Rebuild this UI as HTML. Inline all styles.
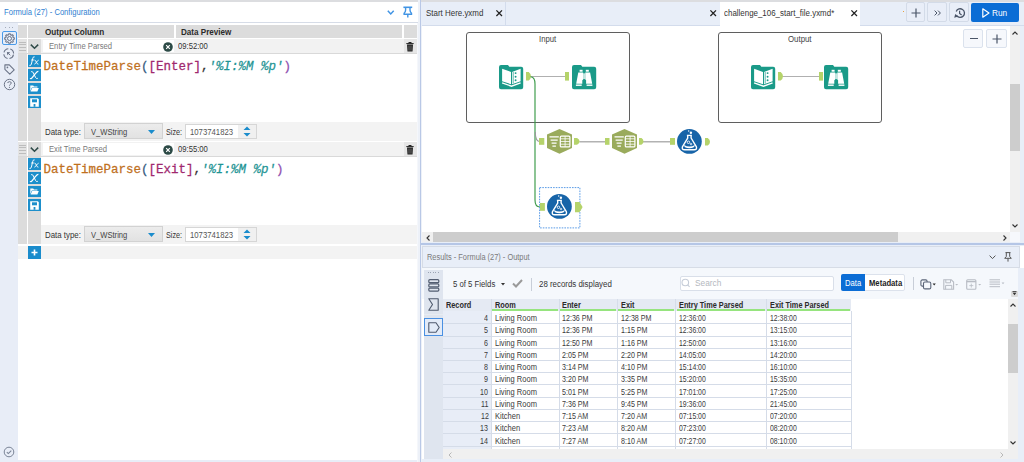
<!DOCTYPE html>
<html><head><meta charset="utf-8">
<style>
*{box-sizing:border-box;margin:0;padding:0}
html,body{width:1024px;height:462px;overflow:hidden;background:#fff;font-family:"Liberation Sans",sans-serif;color:#333}
.a{position:absolute}
.t{position:absolute;white-space:pre;line-height:1}
.m{font-family:"Liberation Mono",monospace}
svg{position:absolute;overflow:visible}
</style></head><body>
<div class="a" style="left:0;top:0;width:1024px;height:462px;overflow:hidden">

<div class="a" style="left:0px;top:0px;width:419px;height:2px;background:#dcdde0;"></div>
<div class="a" style="left:0px;top:2px;width:419px;height:20px;background:#ffffff;"></div>
<div class="t" style="left:4.10px;top:8.00px;font-size:8.5px;color:#2f80d1;font-weight:normal;transform:scaleX(0.8963);transform-origin:0 0;">Formula (27) - Configuration</div>
<svg style="left:387.3px;top:10px" width="7.5" height="5" viewBox="0 0 7.5 5"><path d="M0.8 0.8 L3.75 3.9 L6.7 0.8" fill="none" stroke="#4194e4" stroke-width="1.5"/></svg>
<svg style="left:402.5px;top:6px" width="10" height="12" viewBox="0 0 10 12"><path d="M0.4 1.3 H9.2" stroke="#4194e4" stroke-width="1.6"/><path d="M2.6 1.3 V4 Q2.6 6 1.1 7.3 V8.3 H8.5 V7.3 Q7 6 7 4 V1.3" fill="none" stroke="#4194e4" stroke-width="1.4"/><path d="M4.8 8.3 V11.4" stroke="#4194e4" stroke-width="1.4"/></svg>
<div class="a" style="left:0px;top:22px;width:419px;height:1px;background:#d6dce7;"></div>
<div class="a" style="left:0px;top:23px;width:18px;height:439px;background:#e8edf7;"></div>
<div class="a" style="left:18px;top:23px;width:400px;height:439px;background:#ffffff;"></div>
<div class="a" style="left:5px;top:27px;width:1.3px;height:1.3px;background:#a3abb9;"></div>
<div class="a" style="left:8.6px;top:27px;width:1.3px;height:1.3px;background:#a3abb9;"></div>
<div class="a" style="left:12.2px;top:27px;width:1.3px;height:1.3px;background:#a3abb9;"></div>
<div class="a" style="left:2px;top:31px;width:15px;height:14px;background:#e6eefa;border:1.3px solid #4a9ae8;border-radius:2px"></div>
<svg style="left:3.7px;top:32.7px" width="11" height="11" viewBox="0 0 11 11"><path d="M10.30 5.50 L10.29 5.81 L10.26 6.13 L9.72 6.34 L9.17 6.48 L9.10 6.72 L9.01 6.95 L8.91 7.18 L8.79 7.40 L9.08 7.89 L9.31 8.42 L9.11 8.66 L8.89 8.89 L8.66 9.11 L8.42 9.31 L7.89 9.08 L7.40 8.79 L7.18 8.91 L6.95 9.01 L6.72 9.10 L6.48 9.17 L6.34 9.72 L6.13 10.26 L5.81 10.29 L5.50 10.30 L5.19 10.29 L4.87 10.26 L4.66 9.72 L4.52 9.17 L4.28 9.10 L4.05 9.01 L3.82 8.91 L3.60 8.79 L3.11 9.08 L2.58 9.31 L2.34 9.11 L2.11 8.89 L1.89 8.66 L1.69 8.42 L1.92 7.89 L2.21 7.40 L2.09 7.18 L1.99 6.95 L1.90 6.72 L1.83 6.48 L1.28 6.34 L0.74 6.13 L0.71 5.81 L0.70 5.50 L0.71 5.19 L0.74 4.87 L1.28 4.66 L1.83 4.52 L1.90 4.28 L1.99 4.05 L2.09 3.82 L2.21 3.60 L1.92 3.11 L1.69 2.58 L1.89 2.34 L2.11 2.11 L2.34 1.89 L2.58 1.69 L3.11 1.92 L3.60 2.21 L3.82 2.09 L4.05 1.99 L4.28 1.90 L4.52 1.83 L4.66 1.28 L4.87 0.74 L5.19 0.71 L5.50 0.70 L5.81 0.71 L6.13 0.74 L6.34 1.28 L6.48 1.83 L6.72 1.90 L6.95 1.99 L7.18 2.09 L7.40 2.21 L7.89 1.92 L8.42 1.69 L8.66 1.89 L8.89 2.11 L9.11 2.34 L9.31 2.58 L9.08 3.11 L8.79 3.60 L8.91 3.82 L9.01 4.05 L9.10 4.28 L9.17 4.52 L9.72 4.66 L10.26 4.87 L10.29 5.19 Z" fill="none" stroke="#6c7588" stroke-width="1.1" stroke-linejoin="round"/><circle cx="5.5" cy="5.5" r="2" fill="none" stroke="#6c7588" stroke-width="1"/></svg>
<svg style="left:3px;top:48px" width="12" height="12" viewBox="0 0 12 12"><circle cx="5.7" cy="5.7" r="4.9" fill="none" stroke="#6c7588" stroke-width="1.1" stroke-dasharray="5.7 2" stroke-dashoffset="-1"/><path d="M3.9 3.9 L7.2 4.3 L4.3 7.2 Z" fill="#6c7588"/><path d="M5.2 5.2 L7.3 7.3" stroke="#6c7588" stroke-width="1"/></svg>
<svg style="left:3.6px;top:63.8px" width="11" height="11" viewBox="0 0 11 11"><path d="M0.9 0.9 H5.3 L10.2 5.8 L5.8 10.2 L0.9 5.3 Z" fill="none" stroke="#6c7588" stroke-width="1.1" stroke-linejoin="round"/><circle cx="3.4" cy="3.4" r="0.85" fill="#6c7588"/></svg>
<svg style="left:3px;top:78px" width="13" height="13" viewBox="0 0 13 13"><circle cx="6.5" cy="6.5" r="5.2" fill="none" stroke="#6c7588" stroke-width="1"/><path d="M4.7 5 C4.7 3.2 8.3 3.2 8.3 5 C8.3 6.3 6.5 6.2 6.5 7.6" fill="none" stroke="#6c7588" stroke-width="1"/><circle cx="6.5" cy="9.3" r="0.65" fill="#6c7588"/></svg>
<svg style="left:3px;top:446px" width="13" height="13" viewBox="0 0 13 13"><circle cx="6" cy="6" r="4.8" fill="none" stroke="#7a8496" stroke-width="1"/><path d="M3.8 6.2 L5.3 7.6 L8.3 4.6" fill="none" stroke="#7a8496" stroke-width="1.1"/></svg>
<div class="a" style="left:0px;top:460px;width:419px;height:2px;background:#e8edf7;"></div>
<div class="a" style="left:18px;top:24.5px;width:9px;height:13px;background:#dcdcdc;"></div>
<div class="a" style="left:28px;top:24.5px;width:13px;height:13px;background:#dcdcdc;"></div>
<div class="a" style="left:41px;top:24.5px;width:133px;height:13px;background:#dcdcdc;"></div>
<div class="a" style="left:176px;top:24.5px;width:226px;height:13px;background:#dcdcdc;"></div>
<div class="a" style="left:403.5px;top:24.5px;width:13px;height:13px;background:#dcdcdc;"></div>
<div class="t" style="left:45.10px;top:28.00px;font-size:8.5px;color:#2b2b2b;font-weight:bold;transform:scaleX(0.9581);transform-origin:0 0;">Output Column</div>
<div class="t" style="left:181.00px;top:28.00px;font-size:8.5px;color:#2b2b2b;font-weight:bold;transform:scaleX(0.9528);transform-origin:0 0;">Data Preview</div>
<div class="a" style="left:18px;top:39px;width:9px;height:14px;background:#e4e4e4;"></div>
<div class="a" style="left:19px;top:41.5px;width:7px;height:0.9px;background:#bdbdbd;"></div>
<div class="a" style="left:19px;top:44.3px;width:7px;height:0.9px;background:#bdbdbd;"></div>
<div class="a" style="left:19px;top:47.1px;width:7px;height:0.9px;background:#bdbdbd;"></div>
<div class="a" style="left:19px;top:49.9px;width:7px;height:0.9px;background:#bdbdbd;"></div>
<div class="a" style="left:28px;top:39px;width:13px;height:14px;background:#dcdcdc;"></div>
<svg style="left:30px;top:43.5px" width="9" height="5" viewBox="0 0 9 5"><path d="M0.8 0.6 L4.5 4.2 L8.2 0.6" fill="none" stroke="#2e4a48" stroke-width="1.5"/></svg>
<div class="a" style="left:41px;top:39px;width:362.5px;height:14px;background:#f2f2f2;"></div>
<div class="a" style="left:42.7px;top:40px;width:131px;height:12px;background:#ffffff;"></div>
<div class="t" style="left:48.75px;top:42.00px;font-size:8.5px;color:#7a7a7a;font-weight:normal;transform:scaleX(0.9021);transform-origin:0 0;">Entry Time Parsed</div>
<svg style="left:163px;top:42px" width="10" height="10" viewBox="0 0 10 10"><circle cx="5" cy="5" r="4.8" fill="#2c4a46"/><path d="M3.2 3.2 L6.8 6.8 M6.8 3.2 L3.2 6.8" stroke="#fff" stroke-width="1.2"/></svg>
<div class="t" style="left:178.00px;top:42.00px;font-size:8.5px;color:#333;font-weight:normal;transform:scaleX(0.9030);transform-origin:0 0;">09:52:00</div>
<div class="a" style="left:403.5px;top:39px;width:13px;height:14px;background:#e6e6e6;"></div>
<svg style="left:405.5px;top:41.5px" width="8" height="10" viewBox="0 0 8 10"><path d="M0.3 1.6 H7.7 M2.8 1.6 V0.5 H5.2 V1.6" fill="none" stroke="#222" stroke-width="1"/><path d="M1 2.6 H7 L6.5 9.6 H1.5 Z" fill="#222"/><path d="M2.8 3.6 V8.6 M4 3.6 V8.6 M5.2 3.6 V8.6" stroke="#888" stroke-width="0.5"/></svg>
<div class="a" style="left:18px;top:53px;width:398.5px;height:1px;background:#d9d9d9;"></div>
<div class="a" style="left:18px;top:54px;width:9px;height:68px;background:#dcdcdc;"></div>
<div class="a" style="left:28px;top:54px;width:13px;height:68px;background:#dcdcdc;"></div>
<div class="a" style="left:28.3px;top:55px;width:12.3px;height:12px;background:#1d8fcb"></div>
<svg style="left:28.3px;top:55px" width="12.3" height="12" viewBox="0 0 12.3 12"><path d="M6.6 1.9 Q5.4 1.2 4.8 3.2 L3.4 9 Q2.8 11 1.4 10.4" fill="none" stroke="#fff" stroke-width="0.95"/><path d="M3 5 H6.2" stroke="#fff" stroke-width="0.8"/><path d="M6.6 5.2 Q7.6 5 8.4 7.2 Q9.2 9.4 10.4 9.2 M10.6 5.2 Q9.6 5.4 8.4 7.2 Q7.2 9.2 6.4 9.2" fill="none" stroke="#fff" stroke-width="0.9"/></svg>
<div class="a" style="left:28.3px;top:69px;width:12.3px;height:11.7px;background:#1d8fcb"></div>
<svg style="left:28.3px;top:69px" width="12.3" height="11.7" viewBox="0 0 12.3 11.7"><path d="M3.2 2.6 Q4.6 2.2 5.4 4 L7.6 8.6 Q8.4 10 9.8 9.4" fill="none" stroke="#fff" stroke-width="1"/><path d="M10.4 2.4 Q9.4 2.2 7.4 4.6 L4.2 8.6 Q3 10.2 2 9.4" fill="none" stroke="#fff" stroke-width="1.2"/></svg>
<div class="a" style="left:28.3px;top:82.5px;width:12.3px;height:11.7px;background:#1d8fcb"></div>
<svg style="left:30.3px;top:85.3px" width="9" height="7" viewBox="0 0 9 7"><path d="M0.3 0.6 H3.2 L4 1.4 H7.4 V2.6 H1.8 L0.3 6.2 Z" fill="#fff"/><path d="M2.2 3.1 H8.8 L7.4 6.6 H0.6 Z" fill="#fff"/></svg>
<div class="a" style="left:28.3px;top:96.2px;width:12.3px;height:11.6px;background:#1d8fcb"></div>
<svg style="left:30px;top:97.6px" width="9" height="9" viewBox="0 0 9 9"><path d="M0.2 0.2 H7.8 L8.8 1.2 V8.8 H0.2 Z" fill="#fff"/><rect x="2" y="1.3" width="5" height="3" fill="#1d8fcb"/><rect x="3.6" y="6" width="1.8" height="2.8" fill="#1d8fcb"/></svg>
<div class="t m" style="left:43.5px;top:60.4px;font-size:12.5px;color:#333;-webkit-text-stroke:0.25px currentColor;transform:scaleY(1.07);transform-origin:0 0"><span style="color:#c0701e">DateTimeParse</span><span style="color:#345a80">(</span><span style="color:#a0286e">[Enter]</span><span style="color:#333">,</span><span style="color:#1e9494;font-style:italic">'%I:%M %p'</span><span style="color:#9050b0">)</span></div>
<div class="a" style="left:18px;top:122px;width:9px;height:19px;background:#dcdcdc;"></div>
<div class="a" style="left:28px;top:122px;width:13px;height:19px;background:#dcdcdc;"></div>
<div class="a" style="left:41px;top:122px;width:375.5px;height:19px;background:#f3f3f3;"></div>
<div class="t" style="left:44.90px;top:128.00px;font-size:8.5px;color:#333;font-weight:normal;transform:scaleX(0.9256);transform-origin:0 0;">Data type:</div>
<div class="a" style="left:84px;top:123.4px;width:78.6px;height:16px;background:linear-gradient(#ececec,#e2e2e2);border:1px solid #d2d2d2"></div>
<div class="t" style="left:91.30px;top:128.00px;font-size:8.5px;color:#444;font-weight:normal;transform:scaleX(0.8927);transform-origin:0 0;">V_WString</div>
<svg style="left:148px;top:130px" width="7" height="4" viewBox="0 0 7 4"><path d="M0 0 H7 L3.5 4 Z" fill="#1a8ccc"/></svg>
<div class="t" style="left:165.80px;top:128.00px;font-size:8.5px;color:#333;font-weight:normal;transform:scaleX(0.8526);transform-origin:0 0;">Size:</div>
<div class="a" style="left:185px;top:123.5px;width:72px;height:15.5px;background:#ffffff;border:1px solid #d6d6d6"></div>
<div class="a" style="left:238px;top:124.5px;width:18px;height:13.5px;background:#f0f0f0;"></div>
<div class="t" style="left:190.40px;top:128.00px;font-size:8.5px;color:#555;font-weight:normal;transform:scaleX(0.9106);transform-origin:0 0;">1073741823</div>
<svg style="left:243px;top:126px" width="8" height="11" viewBox="0 0 8 11"><path d="M0.5 4 L4 0.5 L7.5 4 Z M0.5 7 L4 10.5 L7.5 7 Z" fill="#1a8ccc"/></svg>
<div class="a" style="left:18px;top:142px;width:9px;height:14px;background:#e4e4e4;"></div>
<div class="a" style="left:19px;top:144.5px;width:7px;height:0.9px;background:#bdbdbd;"></div>
<div class="a" style="left:19px;top:147.3px;width:7px;height:0.9px;background:#bdbdbd;"></div>
<div class="a" style="left:19px;top:150.1px;width:7px;height:0.9px;background:#bdbdbd;"></div>
<div class="a" style="left:19px;top:152.9px;width:7px;height:0.9px;background:#bdbdbd;"></div>
<div class="a" style="left:28px;top:142px;width:13px;height:14px;background:#dcdcdc;"></div>
<svg style="left:30px;top:146.5px" width="9" height="5" viewBox="0 0 9 5"><path d="M0.8 0.6 L4.5 4.2 L8.2 0.6" fill="none" stroke="#2e4a48" stroke-width="1.5"/></svg>
<div class="a" style="left:41px;top:142px;width:362.5px;height:14px;background:#f2f2f2;"></div>
<div class="a" style="left:42.7px;top:143px;width:131px;height:12px;background:#ffffff;"></div>
<div class="t" style="left:48.75px;top:145.00px;font-size:8.5px;color:#7a7a7a;font-weight:normal;transform:scaleX(0.9023);transform-origin:0 0;">Exit Time Parsed</div>
<svg style="left:163px;top:145px" width="10" height="10" viewBox="0 0 10 10"><circle cx="5" cy="5" r="4.8" fill="#2c4a46"/><path d="M3.2 3.2 L6.8 6.8 M6.8 3.2 L3.2 6.8" stroke="#fff" stroke-width="1.2"/></svg>
<div class="t" style="left:178.00px;top:145.00px;font-size:8.5px;color:#333;font-weight:normal;transform:scaleX(0.9030);transform-origin:0 0;">09:55:00</div>
<div class="a" style="left:403.5px;top:142px;width:13px;height:14px;background:#e6e6e6;"></div>
<svg style="left:405.5px;top:144.5px" width="8" height="10" viewBox="0 0 8 10"><path d="M0.3 1.6 H7.7 M2.8 1.6 V0.5 H5.2 V1.6" fill="none" stroke="#222" stroke-width="1"/><path d="M1 2.6 H7 L6.5 9.6 H1.5 Z" fill="#222"/><path d="M2.8 3.6 V8.6 M4 3.6 V8.6 M5.2 3.6 V8.6" stroke="#888" stroke-width="0.5"/></svg>
<div class="a" style="left:18px;top:156px;width:398.5px;height:1px;background:#d9d9d9;"></div>
<div class="a" style="left:18px;top:157px;width:9px;height:68px;background:#dcdcdc;"></div>
<div class="a" style="left:28px;top:157px;width:13px;height:68px;background:#dcdcdc;"></div>
<div class="a" style="left:28.3px;top:158px;width:12.3px;height:12px;background:#1d8fcb"></div>
<svg style="left:28.3px;top:158px" width="12.3" height="12" viewBox="0 0 12.3 12"><path d="M6.6 1.9 Q5.4 1.2 4.8 3.2 L3.4 9 Q2.8 11 1.4 10.4" fill="none" stroke="#fff" stroke-width="0.95"/><path d="M3 5 H6.2" stroke="#fff" stroke-width="0.8"/><path d="M6.6 5.2 Q7.6 5 8.4 7.2 Q9.2 9.4 10.4 9.2 M10.6 5.2 Q9.6 5.4 8.4 7.2 Q7.2 9.2 6.4 9.2" fill="none" stroke="#fff" stroke-width="0.9"/></svg>
<div class="a" style="left:28.3px;top:172px;width:12.3px;height:11.7px;background:#1d8fcb"></div>
<svg style="left:28.3px;top:172px" width="12.3" height="11.7" viewBox="0 0 12.3 11.7"><path d="M3.2 2.6 Q4.6 2.2 5.4 4 L7.6 8.6 Q8.4 10 9.8 9.4" fill="none" stroke="#fff" stroke-width="1"/><path d="M10.4 2.4 Q9.4 2.2 7.4 4.6 L4.2 8.6 Q3 10.2 2 9.4" fill="none" stroke="#fff" stroke-width="1.2"/></svg>
<div class="a" style="left:28.3px;top:185.5px;width:12.3px;height:11.7px;background:#1d8fcb"></div>
<svg style="left:30.3px;top:188.3px" width="9" height="7" viewBox="0 0 9 7"><path d="M0.3 0.6 H3.2 L4 1.4 H7.4 V2.6 H1.8 L0.3 6.2 Z" fill="#fff"/><path d="M2.2 3.1 H8.8 L7.4 6.6 H0.6 Z" fill="#fff"/></svg>
<div class="a" style="left:28.3px;top:199.2px;width:12.3px;height:11.6px;background:#1d8fcb"></div>
<svg style="left:30px;top:200.6px" width="9" height="9" viewBox="0 0 9 9"><path d="M0.2 0.2 H7.8 L8.8 1.2 V8.8 H0.2 Z" fill="#fff"/><rect x="2" y="1.3" width="5" height="3" fill="#1d8fcb"/><rect x="3.6" y="6" width="1.8" height="2.8" fill="#1d8fcb"/></svg>
<div class="t m" style="left:43.5px;top:163.4px;font-size:12.5px;color:#333;-webkit-text-stroke:0.25px currentColor;transform:scaleY(1.07);transform-origin:0 0"><span style="color:#c0701e">DateTimeParse</span><span style="color:#345a80">(</span><span style="color:#a0286e">[Exit]</span><span style="color:#333">,</span><span style="color:#1e9494;font-style:italic">'%I:%M %p'</span><span style="color:#9050b0">)</span></div>
<div class="a" style="left:18px;top:225px;width:9px;height:19px;background:#dcdcdc;"></div>
<div class="a" style="left:28px;top:225px;width:13px;height:19px;background:#dcdcdc;"></div>
<div class="a" style="left:41px;top:225px;width:375.5px;height:19px;background:#f3f3f3;"></div>
<div class="t" style="left:44.90px;top:231.00px;font-size:8.5px;color:#333;font-weight:normal;transform:scaleX(0.9256);transform-origin:0 0;">Data type:</div>
<div class="a" style="left:84px;top:226.4px;width:78.6px;height:16px;background:linear-gradient(#ececec,#e2e2e2);border:1px solid #d2d2d2"></div>
<div class="t" style="left:91.30px;top:231.00px;font-size:8.5px;color:#444;font-weight:normal;transform:scaleX(0.8927);transform-origin:0 0;">V_WString</div>
<svg style="left:148px;top:233px" width="7" height="4" viewBox="0 0 7 4"><path d="M0 0 H7 L3.5 4 Z" fill="#1a8ccc"/></svg>
<div class="t" style="left:165.80px;top:231.00px;font-size:8.5px;color:#333;font-weight:normal;transform:scaleX(0.8526);transform-origin:0 0;">Size:</div>
<div class="a" style="left:185px;top:226.5px;width:72px;height:15.5px;background:#ffffff;border:1px solid #d6d6d6"></div>
<div class="a" style="left:238px;top:227.5px;width:18px;height:13.5px;background:#f0f0f0;"></div>
<div class="t" style="left:190.40px;top:231.00px;font-size:8.5px;color:#555;font-weight:normal;transform:scaleX(0.9106);transform-origin:0 0;">1073741823</div>
<svg style="left:243px;top:229px" width="8" height="11" viewBox="0 0 8 11"><path d="M0.5 4 L4 0.5 L7.5 4 Z M0.5 7 L4 10.5 L7.5 7 Z" fill="#1a8ccc"/></svg>
<div class="a" style="left:18px;top:246px;width:398.5px;height:13px;background:#f3f3f3;"></div>
<div class="a" style="left:27.5px;top:246px;width:13.5px;height:13px;background:#1a8ccc;"></div>
<svg style="left:30.5px;top:249px" width="7" height="7" viewBox="0 0 7 7"><path d="M3.5 0.5 V6.5 M0.5 3.5 H6.5" stroke="#fff" stroke-width="1.6"/></svg>
<div class="a" style="left:416.5px;top:23px;width:5px;height:439px;background:#f5f7fb;"></div>
<div class="a" style="left:418px;top:0px;width:3.5px;height:462px;background:#edf1f8;"></div>
<div class="a" style="left:419.7px;top:0px;width:1.5px;height:462px;background:#b9c8e6;"></div>
<div class="a" style="left:421px;top:0px;width:603px;height:1.5px;background:#dcdde0;"></div>
<div class="a" style="left:421px;top:1.5px;width:603px;height:24px;background:#e8eef8;"></div>
<div class="a" style="left:422px;top:25px;width:602px;height:1px;background:#d3dcec;"></div>
<div class="t" style="left:426.00px;top:9.00px;font-size:8.5px;color:#333;font-weight:normal;transform:scaleX(0.9344);transform-origin:0 0;">Start Here.yxmd</div>
<svg style="left:495.8px;top:10.100000000000001px" width="6.4" height="6.4" viewBox="0 0 6.4 6.4"><path d="M0.4 0.4 L6.0 6.0 M6.0 0.4 L0.4 6.0" stroke="#222" stroke-width="1.3"/></svg>
<div class="a" style="left:505px;top:1.5px;width:1px;height:24px;background:#d3dcec;"></div>
<svg style="left:710.0999999999999px;top:10.100000000000001px" width="6.4" height="6.4" viewBox="0 0 6.4 6.4"><path d="M0.4 0.4 L6.0 6.0 M6.0 0.4 L0.4 6.0" stroke="#222" stroke-width="1.3"/></svg>
<div class="a" style="left:719.5px;top:1.5px;width:140.5px;height:25px;background:#ffffff;"></div>
<div class="t" style="left:723.90px;top:9.00px;font-size:8.5px;color:#333;font-weight:normal;transform:scaleX(0.9331);transform-origin:0 0;">challenge_106_start_file.yxmd*</div>
<svg style="left:850.8px;top:10.100000000000001px" width="6.4" height="6.4" viewBox="0 0 6.4 6.4"><path d="M0.4 0.4 L6.0 6.0 M6.0 0.4 L0.4 6.0" stroke="#222" stroke-width="1.3"/></svg>
<div class="a" style="left:903px;top:11px;width:1px;height:1px;background:#e8a040;"></div>
<div class="a" style="left:905.7px;top:2.4px;width:19.8px;height:20px;background:#e9eef8;border:1px solid #d3dbe8;border-radius:2px"></div>
<div class="a" style="left:927.3px;top:2.4px;width:19.8px;height:20px;background:#e9eef8;border:1px solid #d3dbe8;border-radius:2px"></div>
<div class="a" style="left:949.3px;top:2.4px;width:19.8px;height:20px;background:#e9eef8;border:1px solid #d3dbe8;border-radius:2px"></div>
<svg style="left:911px;top:7.5px" width="10" height="10" viewBox="0 0 10 10"><path d="M5 0.5 V9.5 M0.5 5 H9.5" stroke="#4a5568" stroke-width="1.2"/></svg>
<svg style="left:933.5px;top:9.5px" width="8" height="6" viewBox="0 0 8 6"><path d="M0.6 0.6 L3 3 L0.6 5.4 M4 0.6 L6.4 3 L4 5.4" fill="none" stroke="#4a5568" stroke-width="1"/></svg>
<svg style="left:953px;top:6.7px" width="14" height="13" viewBox="0 0 14 13"><path d="M3.2 4.4 A4.3 4.3 0 1 1 3.7 8.6" fill="none" stroke="#4a5568" stroke-width="1.3"/><path d="M1.2 10.8 L2.3 6.9 L5.4 9.6 Z" fill="#4a5568"/><path d="M6.6 3.8 V6.4 L8.6 8" fill="none" stroke="#4a5568" stroke-width="1.2"/></svg>
<div class="a" style="left:971px;top:2.7px;width:48px;height:19.4px;background:#0b6dd5;border-radius:2px"></div>
<svg style="left:981.5px;top:7.5px" width="8" height="10" viewBox="0 0 8 10"><path d="M0.8 0.8 L7 5 L0.8 9.2 Z" fill="none" stroke="#fff" stroke-width="1.2" stroke-linejoin="round"/></svg>
<div class="t" style="left:992.20px;top:9.00px;font-size:8.5px;color:#fff;font-weight:normal;transform:scaleX(0.9733);transform-origin:0 0;">Run</div>
<div class="a" style="left:422px;top:26px;width:588px;height:206px;background:#ffffff;"></div>
<div class="a" style="left:963.4px;top:28.8px;width:20px;height:19.6px;background:#f6f8fc;border:1px solid #dbe2ed;border-radius:2px"></div>
<div class="a" style="left:986.3px;top:28.8px;width:20.3px;height:19.6px;background:#f6f8fc;border:1px solid #dbe2ed;border-radius:2px"></div>
<div class="a" style="left:969.5px;top:38px;width:8px;height:1.3px;background:#4a5568;"></div>
<svg style="left:991.5px;top:34px" width="10" height="10" viewBox="0 0 10 10"><path d="M5 0.5 V9.5 M0.5 5 H9.5" stroke="#4a5568" stroke-width="1.2"/></svg>
<div class="a" style="left:1010px;top:26px;width:10px;height:206px;background:#f0f0f0;"></div>
<div class="a" style="left:1010px;top:84.4px;width:10px;height:66.6px;background:#cdcdcd;"></div>
<svg style="left:1012px;top:30.5px" width="6" height="4" viewBox="0 0 6 4"><path d="M0.5 3.5 L3 1 L5.5 3.5" fill="none" stroke="#333" stroke-width="1.1"/></svg>
<svg style="left:1012px;top:223.5px" width="6" height="4" viewBox="0 0 6 4"><path d="M0.5 0.5 L3 3 L5.5 0.5" fill="none" stroke="#333" stroke-width="1.1"/></svg>
<div class="a" style="left:1020px;top:26px;width:4px;height:216px;background:#e8eef8;"></div>
<div class="a" style="left:422px;top:232px;width:588px;height:10px;background:#f0f0f0;"></div>
<div class="a" style="left:433px;top:232px;width:465px;height:10px;background:#cdcdcd;"></div>
<svg style="left:425.5px;top:234.5px" width="4" height="6" viewBox="0 0 4 6"><path d="M3.5 0.5 L1 3 L3.5 5.5" fill="none" stroke="#333" stroke-width="1.1"/></svg>
<svg style="left:1003px;top:234.5px" width="4" height="6" viewBox="0 0 4 6"><path d="M0.5 0.5 L3 3 L0.5 5.5" fill="none" stroke="#333" stroke-width="1.1"/></svg>
<div class="a" style="left:1010px;top:232px;width:10px;height:10px;background:#f6f8fc;"></div>
<div class="a" style="left:422px;top:242px;width:602px;height:4px;background:#e8eef8;"></div>
<div class="a" style="left:421px;top:243.4px;width:603px;height:1.8px;background:#b5c6e6;"></div>
<div class="a" style="left:466px;top:31.9px;width:164px;height:90.9px;background:transparent;border:1.3px solid #5f5f5f;border-radius:3px"></div>
<div class="t" style="left:538.70px;top:35.00px;font-size:8.5px;color:#444;font-weight:normal;transform:scaleX(0.9105);transform-origin:0 0;">Input</div>
<div class="a" style="left:718.2px;top:31.9px;width:163.79999999999995px;height:90.9px;background:transparent;border:1.3px solid #5f5f5f;border-radius:3px"></div>
<div class="t" style="left:787.90px;top:35.00px;font-size:8.5px;color:#444;font-weight:normal;transform:scaleX(0.9231);transform-origin:0 0;">Output</div>
<svg style="left:498.5px;top:64.5px" width="25" height="25" viewBox="0 0 25 25"><path d="M0 2 Q0 0 2 0 H9 L10.3 1.7 H22.2 Q24.2 1.7 24.2 3.7 V22.2 Q24.2 24.2 22.2 24.2 H2 Q0 24.2 0 22.2 Z" fill="#1a9a88"/><path d="M3.1 3.8 L12 6.9 V19.2 L3.1 16.3 Z" fill="#fff"/><path d="M13 6.9 L21.6 3.8 V16.3 L13 19.2 Z" fill="#fff"/><path d="M3.1 17.9 L12.5 21.2 L21.6 17.9" fill="none" stroke="#fff" stroke-width="1.3"/><path d="M14.2 7 V18.5" stroke="#1a9a88" stroke-width="0.7"/><circle cx="16.6" cy="8.1" r="0.95" fill="#1a9a88"/><circle cx="16.6" cy="11.7" r="0.95" fill="#1a9a88"/><circle cx="16.6" cy="15.2" r="0.95" fill="#1a9a88"/></svg>
<svg style="left:571.7px;top:64.5px" width="25" height="25" viewBox="0 0 25 25"><path d="M0 2 Q0 0 2 0 H9 L10.3 1.7 H22.2 Q24.2 1.7 24.2 3.7 V22.2 Q24.2 24.2 22.2 24.2 H2 Q0 24.2 0 22.2 Z" fill="#1a9a88"/><rect x="7.6" y="4.8" width="3" height="1.9" fill="#fff"/><rect x="13.8" y="4.8" width="3" height="1.9" fill="#fff"/><path d="M6.3 7.6 H11.1 V18.7 H4.2 Z" fill="#fff"/><path d="M18.1 7.6 H13.3 V18.7 H20.2 Z" fill="#fff"/><rect x="11.1" y="8.3" width="2.2" height="6" fill="#fff" opacity="0.75"/><path d="M10.3 18.9 V15.3 Q12.2 13 14.1 15.3 V18.9 Z" fill="#1a9a88"/><rect x="3.9" y="19.5" width="5.8" height="1.4" fill="#fff"/><rect x="14.6" y="19.5" width="5.8" height="1.4" fill="#fff"/></svg>
<svg style="left:750.7px;top:64.5px" width="25" height="25" viewBox="0 0 25 25"><path d="M0 2 Q0 0 2 0 H9 L10.3 1.7 H22.2 Q24.2 1.7 24.2 3.7 V22.2 Q24.2 24.2 22.2 24.2 H2 Q0 24.2 0 22.2 Z" fill="#1a9a88"/><path d="M3.1 3.8 L12 6.9 V19.2 L3.1 16.3 Z" fill="#fff"/><path d="M13 6.9 L21.6 3.8 V16.3 L13 19.2 Z" fill="#fff"/><path d="M3.1 17.9 L12.5 21.2 L21.6 17.9" fill="none" stroke="#fff" stroke-width="1.3"/><path d="M14.2 7 V18.5" stroke="#1a9a88" stroke-width="0.7"/><circle cx="16.6" cy="8.1" r="0.95" fill="#1a9a88"/><circle cx="16.6" cy="11.7" r="0.95" fill="#1a9a88"/><circle cx="16.6" cy="15.2" r="0.95" fill="#1a9a88"/></svg>
<svg style="left:823.6px;top:64.5px" width="25" height="25" viewBox="0 0 25 25"><path d="M0 2 Q0 0 2 0 H9 L10.3 1.7 H22.2 Q24.2 1.7 24.2 3.7 V22.2 Q24.2 24.2 22.2 24.2 H2 Q0 24.2 0 22.2 Z" fill="#1a9a88"/><rect x="7.6" y="4.8" width="3" height="1.9" fill="#fff"/><rect x="13.8" y="4.8" width="3" height="1.9" fill="#fff"/><path d="M6.3 7.6 H11.1 V18.7 H4.2 Z" fill="#fff"/><path d="M18.1 7.6 H13.3 V18.7 H20.2 Z" fill="#fff"/><rect x="11.1" y="8.3" width="2.2" height="6" fill="#fff" opacity="0.75"/><path d="M10.3 18.9 V15.3 Q12.2 13 14.1 15.3 V18.9 Z" fill="#1a9a88"/><rect x="3.9" y="19.5" width="5.8" height="1.4" fill="#fff"/><rect x="14.6" y="19.5" width="5.8" height="1.4" fill="#fff"/></svg>
<svg style="left:525.6px;top:72.4px" width="5" height="8.6" viewBox="0 0 5 8.6"><path d="M0 0 H2.75 Q5 1.72 5 4.3 Q5 6.88 2.75 8.6 H0 Z" fill="#b5d36a"/></svg>
<svg style="left:564.5px;top:72.4px" width="4" height="8.6" viewBox="0 0 4 8.6"><rect x="0" y="0" width="4" height="8.6" fill="#b5d36a"/></svg>
<svg style="left:777.6px;top:72.4px" width="5" height="8.6" viewBox="0 0 5 8.6"><path d="M0 0 H2.75 Q5 1.72 5 4.3 Q5 6.88 2.75 8.6 H0 Z" fill="#b5d36a"/></svg>
<svg style="left:818.5px;top:72.4px" width="4" height="8.6" viewBox="0 0 4 8.6"><rect x="0" y="0" width="4" height="8.6" fill="#b5d36a"/></svg>
<div class="a" style="left:530.6px;top:76.1px;width:34px;height:1.2px;background:#b0b0b0;"></div>
<div class="a" style="left:782.6px;top:76.1px;width:36px;height:1.2px;background:#b0b0b0;"></div>
<svg style="left:0;top:0" width="1024" height="462" viewBox="0 0 1024 462"><path d="M530.5 76.7 Q535 76.7 535 84 V200 Q535 207 540 207" fill="none" stroke="#3a9a48" stroke-width="1.15"/><path d="M535.3 132 Q535.3 141.5 540 141.5" fill="none" stroke="#9a9a9a" stroke-width="1.1"/><path d="M579.4 141.7 H605 M643 141.7 H670" fill="none" stroke="#b2b2b2" stroke-width="1.4"/></svg>
<svg style="left:546.7px;top:128.9px" width="25" height="24.7" viewBox="0 0 25 24.7"><path d="M12.5 0 L25 5.4 V19 L12.5 24.7 L0 19 V5.4 Z" fill="#9aab5c"/><path d="M2.5 7.9 H11.8 M3.6 11.1 H10.7 M4.6 14.1 H9.6 M5.4 17.1 H8.9" stroke="#fff" stroke-width="1.4"/><rect x="13.3" y="7.2" width="9.6" height="10.7" rx="1" fill="none" stroke="#fff" stroke-width="1.2"/><path d="M13.3 9.8 H22.9 M13.3 12.5 H22.9 M13.3 15.2 H22.9 M18.1 7.2 V17.9" stroke="#fff" stroke-width="0.8"/></svg>
<svg style="left:611.6px;top:128.9px" width="25" height="24.7" viewBox="0 0 25 24.7"><path d="M12.5 0 L25 5.4 V19 L12.5 24.7 L0 19 V5.4 Z" fill="#9aab5c"/><path d="M2.5 7.9 H11.8 M3.6 11.1 H10.7 M4.6 14.1 H9.6 M5.4 17.1 H8.9" stroke="#fff" stroke-width="1.4"/><rect x="13.3" y="7.2" width="9.6" height="10.7" rx="1" fill="none" stroke="#fff" stroke-width="1.2"/><path d="M13.3 9.8 H22.9 M13.3 12.5 H22.9 M13.3 15.2 H22.9 M18.1 7.2 V17.9" stroke="#fff" stroke-width="0.8"/></svg>
<svg style="left:539.4px;top:138.3px" width="5.3" height="6.8" viewBox="0 0 5.3 6.8"><rect x="0" y="0" width="5.3" height="6.8" fill="#b5d36a"/></svg>
<svg style="left:573.8px;top:138.3px" width="5.6" height="6.8" viewBox="0 0 5.6 6.8"><path d="M0 0 H3.08 Q5.6 1.36 5.6 3.4 Q5.6 5.44 3.08 6.8 H0 Z" fill="#b5d36a"/></svg>
<svg style="left:604.8px;top:138.3px" width="4.5" height="6.8" viewBox="0 0 4.5 6.8"><rect x="0" y="0" width="4.5" height="6.8" fill="#b5d36a"/></svg>
<svg style="left:638.8px;top:138.3px" width="4.5" height="6.8" viewBox="0 0 4.5 6.8"><path d="M0 0 H2.475 Q4.5 1.36 4.5 3.4 Q4.5 5.44 2.475 6.8 H0 Z" fill="#b5d36a"/></svg>
<svg style="left:677.0px;top:129.4px" width="24.8" height="24.8" viewBox="-12.4 -12.4 24.8 24.8"><circle cx="0" cy="0" r="12.4" fill="#1764a8"/><path d="M-2.5 -6 H2.5 M-1.7 -6 V-3.2 L-6.9 5.2 Q-8 8.4 -4.6 8.4 H4.6 Q8 8.4 6.9 5.2 L1.7 -3.4 V-6.6" fill="none" stroke="#fff" stroke-width="1.4" stroke-linejoin="round"/><path d="M-5.5 3.6 Q0 6.6 5.5 3.6 Q5 6.9 0 6.9 Q-5 6.9 -5.5 3.6 Z" fill="#fff"/><circle cx="-0.9" cy="0.9" r="1.25" fill="none" stroke="#fff" stroke-width="0.9"/><circle cx="1.7" cy="2.7" r="0.75" fill="none" stroke="#fff" stroke-width="0.8"/><circle cx="1.5" cy="-8.6" r="1.2" fill="#fff"/><circle cx="-0.7" cy="-10.4" r="0.7" fill="#fff"/></svg>
<svg style="left:669.8px;top:138.3px" width="5" height="6.8" viewBox="0 0 5 6.8"><rect x="0" y="0" width="5" height="6.8" fill="#b5d36a"/></svg>
<svg style="left:704.7px;top:137.8px" width="5" height="7.5" viewBox="0 0 5 7.5"><path d="M0 0 H2.75 Q5 1.5 5 3.75 Q5 6.0 2.75 7.5 H0 Z" fill="#b5d36a"/></svg>
<svg style="left:539px;top:186.6px" width="41.5" height="41.5" viewBox="0 0 41.5 41.5"><rect x="0.6" y="0.6" width="40.3" height="40.3" fill="none" stroke="#5a9be6" stroke-width="1" stroke-dasharray="1.6 1.1"/></svg>
<svg style="left:547.0px;top:194.1px" width="24.8" height="24.8" viewBox="-12.4 -12.4 24.8 24.8"><circle cx="0" cy="0" r="12.4" fill="#1764a8"/><path d="M-2.5 -6 H2.5 M-1.7 -6 V-3.2 L-6.9 5.2 Q-8 8.4 -4.6 8.4 H4.6 Q8 8.4 6.9 5.2 L1.7 -3.4 V-6.6" fill="none" stroke="#fff" stroke-width="1.4" stroke-linejoin="round"/><path d="M-5.5 3.6 Q0 6.6 5.5 3.6 Q5 6.9 0 6.9 Q-5 6.9 -5.5 3.6 Z" fill="#fff"/><circle cx="-0.9" cy="0.9" r="1.25" fill="none" stroke="#fff" stroke-width="0.9"/><circle cx="1.7" cy="2.7" r="0.75" fill="none" stroke="#fff" stroke-width="0.8"/><circle cx="1.5" cy="-8.6" r="1.2" fill="#fff"/><circle cx="-0.7" cy="-10.4" r="0.7" fill="#fff"/></svg>
<svg style="left:539.9px;top:203px" width="4.9" height="7.8" viewBox="0 0 4.9 7.8"><rect x="0" y="0" width="4.9" height="7.8" fill="#b5d36a"/></svg>
<svg style="left:574.5px;top:201.6px" width="7.5" height="10.2" viewBox="0 0 7.5 10.2"><path d="M0 0 H4.5 L7.3 4.4 Q7.6 5.1 7.3 5.8 L4.5 10.2 H0 Z" fill="#b5d36a"/></svg>
<div class="a" style="left:422px;top:246px;width:602px;height:216px;background:#ffffff;"></div>
<div class="a" style="left:422px;top:246px;width:598px;height:22px;background:#e8eef8;border:1px solid #d6dce6"></div>
<div class="t" style="left:426.90px;top:253.00px;font-size:8.5px;color:#7a7a7a;font-weight:normal;transform:scaleX(0.8729);transform-origin:0 0;">Results - Formula (27) - Output</div>
<svg style="left:988.5px;top:254.5px" width="7" height="4.5" viewBox="0 0 7 4.5"><path d="M0.6 0.6 L3.5 3.6 L6.4 0.6" fill="none" stroke="#555" stroke-width="1"/></svg>
<svg style="left:1004px;top:251.5px" width="8" height="10" viewBox="0 0 8 10"><path d="M1.5 0.6 H6.5 M2.3 0.6 V4.5 L0.7 6.3 H7.3 L5.7 4.5 V0.6 M4 6.3 V9.6" fill="none" stroke="#555" stroke-width="1"/></svg>
<div class="a" style="left:422px;top:268px;width:602px;height:31px;background:#f5f8fc;"></div>
<div class="a" style="left:1018px;top:268px;width:6px;height:194px;background:#e8eef8;"></div>
<div class="a" style="left:424px;top:270px;width:19px;height:189px;background:#dfe5ef;"></div>
<div class="a" style="left:427.5px;top:272px;width:1.1px;height:1.1px;background:#9aa3b3;"></div>
<div class="a" style="left:430.1px;top:272px;width:1.1px;height:1.1px;background:#9aa3b3;"></div>
<div class="a" style="left:432.7px;top:272px;width:1.1px;height:1.1px;background:#9aa3b3;"></div>
<div class="a" style="left:435.3px;top:272px;width:1.1px;height:1.1px;background:#9aa3b3;"></div>
<div class="a" style="left:437.9px;top:272px;width:1.1px;height:1.1px;background:#9aa3b3;"></div>
<svg style="left:427.8px;top:279px" width="12" height="13" viewBox="0 0 12 13"><rect x="0.8" y="0.7" width="10" height="3" rx="1" fill="none" stroke="#535e72" stroke-width="1.2"/><rect x="0.8" y="4.9" width="10" height="3" rx="1" fill="none" stroke="#535e72" stroke-width="1.2"/><rect x="0.8" y="9.1" width="10" height="3" rx="1" fill="none" stroke="#535e72" stroke-width="1.2"/></svg>
<div class="a" style="left:424px;top:314.2px;width:19px;height:0.8px;background:#e8ecf2;"></div>
<svg style="left:428px;top:298px" width="11" height="13" viewBox="0 0 11 13"><path d="M0.8 0.8 H10.2 V12.2 H0.8 L4.5 6.5 Z" fill="none" stroke="#4f5a6e" stroke-width="1.1" stroke-linejoin="round"/></svg>
<div class="a" style="left:424.3px;top:317.9px;width:18.3px;height:18.5px;background:#e3ebf8;border:1px solid #4a90e2"></div>
<svg style="left:427.5px;top:321.5px" width="12" height="11" viewBox="0 0 12 11"><path d="M0.8 0.8 H8 L11.2 5.5 L8 10.2 H0.8 Z" fill="none" stroke="#4f5a6e" stroke-width="1.1" stroke-linejoin="round"/></svg>
<div class="t" style="left:452.80px;top:280.00px;font-size:8.5px;color:#333;font-weight:normal;transform:scaleX(0.9130);transform-origin:0 0;">5 of 5 Fields</div>
<svg style="left:501px;top:283px" width="4" height="3" viewBox="0 0 4 3"><path d="M0 0 H4 L2 2.5 Z" fill="#333"/></svg>
<svg style="left:512px;top:278.5px" width="11" height="9" viewBox="0 0 11 9"><path d="M1 4.5 L4 7.5 L10 1" fill="none" stroke="#9a9a9a" stroke-width="2"/></svg>
<div class="a" style="left:531px;top:278px;width:1px;height:13px;background:#c8ced8;"></div>
<div class="t" style="left:538.60px;top:280.00px;font-size:8.5px;color:#333;font-weight:normal;transform:scaleX(0.9282);transform-origin:0 0;">28 records displayed</div>
<div class="a" style="left:679.5px;top:275.5px;width:154.3px;height:15px;background:#ffffff;border:1px solid #d9dfe9;border-radius:2px"></div>
<svg style="left:681px;top:278.3px" width="10" height="10" viewBox="0 0 10 10"><circle cx="4.3" cy="4.5" r="3.3" fill="none" stroke="#c6cdd8" stroke-width="1.1"/><path d="M6.7 6.9 L8.6 8.8" stroke="#c6cdd8" stroke-width="1.1"/></svg>
<div class="t" style="left:694.60px;top:279.00px;font-size:8.5px;color:#b4b8be;font-weight:normal;transform:scaleX(0.9778);transform-origin:0 0;">Search</div>
<div class="a" style="left:840.5px;top:273.9px;width:64.5px;height:17.5px;background:#ffffff;border:1px solid #dce2ec;border-radius:2px"></div>
<div class="a" style="left:840.5px;top:273.9px;width:24px;height:17.5px;background:#0b6dd5;border-radius:2px 0 0 2px"></div>
<div class="t" style="left:844.60px;top:279.00px;font-size:8.5px;color:#fff;font-weight:normal;transform:scaleX(0.9000);transform-origin:0 0;">Data</div>
<div class="t" style="left:868.70px;top:279.00px;font-size:8.5px;color:#222;font-weight:bold;transform:scaleX(0.9000);transform-origin:0 0;">Metadata</div>
<div class="a" style="left:913px;top:277px;width:1px;height:13px;background:#c8ced8;"></div>
<svg style="left:919.5px;top:279px" width="17" height="11" viewBox="0 0 17 11"><rect x="0.9" y="0.9" width="6.2" height="6.2" rx="1.4" fill="none" stroke="#5b6578" stroke-width="1.1"/><rect x="3.5" y="3" width="7.3" height="6.9" rx="1.4" fill="#f5f8fc" stroke="#5b6578" stroke-width="1.1"/><path d="M12.6 4.6 H15.8 L14.2 6.6 Z" fill="#222"/></svg>
<svg style="left:942.5px;top:278.5px" width="16" height="11" viewBox="0 0 16 11"><path d="M0.8 0.8 H8.3 L10.6 3.1 V10.2 H0.8 Z" fill="none" stroke="#b8bcc4" stroke-width="1.1"/><path d="M2.8 0.8 V3.8 H7.5 V0.8 M2.6 10.2 V6.4 H8.8 V10.2" fill="none" stroke="#b8bcc4" stroke-width="1"/><path d="M12.2 5 H15.2 L13.7 6.6 Z" fill="#b8bcc4"/></svg>
<svg style="left:966px;top:278.5px" width="16" height="11" viewBox="0 0 16 11"><rect x="0.7" y="0.7" width="9.2" height="9.6" rx="1" fill="none" stroke="#b8bcc4" stroke-width="1.1"/><path d="M0.7 2.6 H9.9" stroke="#b8bcc4" stroke-width="1.4"/><path d="M5.3 4.6 V8.6 M3.3 6.6 H7.3" fill="none" stroke="#b8bcc4" stroke-width="0.8"/><path d="M12.2 5 H15.2 L13.7 6.6 Z" fill="#b8bcc4"/></svg>
<svg style="left:988.5px;top:278.8px" width="16" height="9" viewBox="0 0 16 9"><path d="M0.5 0.8 H11 M0.5 3 H11 M0.5 5.2 H11 M0.5 7.7 H11" stroke="#b8bcc4" stroke-width="1"/><path d="M12.6 3.6 H15.4 L14 5.2 Z" fill="#b8bcc4"/></svg>
<div class="a" style="left:1010.6px;top:290.6px;width:7px;height:6.8px;background:#dcdcdc;border-radius:1px"></div>
<svg style="left:1011.6px;top:291.4px" width="5" height="5" viewBox="0 0 5 5"><path d="M0.5 0.6 H4.5" stroke="#333" stroke-width="0.9"/><path d="M0.6 1.8 H4.4 L2.5 4.3 Z" fill="#333"/></svg>
<div class="a" style="left:443px;top:299.3px;width:408.4px;height:11.699999999999989px;background:#e5eaf3;"></div>
<div class="a" style="left:490.8px;top:299.3px;width:1px;height:11.699999999999989px;background:#d6dde9;"></div>
<div class="a" style="left:558.5px;top:299.3px;width:1px;height:11.699999999999989px;background:#d6dde9;"></div>
<div class="a" style="left:616.8px;top:299.3px;width:1px;height:11.699999999999989px;background:#d6dde9;"></div>
<div class="a" style="left:675.0px;top:299.3px;width:1px;height:11.699999999999989px;background:#d6dde9;"></div>
<div class="a" style="left:765.9px;top:299.3px;width:1px;height:11.699999999999989px;background:#d6dde9;"></div>
<div class="a" style="left:492.3px;top:309.3px;width:65.69999999999999px;height:1.3px;background:#96e47e;"></div>
<div class="a" style="left:560px;top:309.3px;width:56.299999999999955px;height:1.3px;background:#96e47e;"></div>
<div class="a" style="left:618.3px;top:309.3px;width:56.200000000000045px;height:1.3px;background:#96e47e;"></div>
<div class="a" style="left:676.5px;top:309.3px;width:88.89999999999998px;height:1.3px;background:#96e47e;"></div>
<div class="a" style="left:767.4px;top:309.3px;width:83.0px;height:1.3px;background:#96e47e;"></div>
<div class="t" style="left:446.30px;top:301.00px;font-size:8.5px;color:#2b2b2b;font-weight:bold;transform:scaleX(0.8625);transform-origin:0 0;">Record</div>
<div class="t" style="left:494.60px;top:301.00px;font-size:8.5px;color:#2b2b2b;font-weight:bold;transform:scaleX(0.8625);transform-origin:0 0;">Room</div>
<div class="t" style="left:562.30px;top:301.00px;font-size:8.5px;color:#2b2b2b;font-weight:bold;transform:scaleX(0.8625);transform-origin:0 0;">Enter</div>
<div class="t" style="left:620.60px;top:301.00px;font-size:8.5px;color:#2b2b2b;font-weight:bold;transform:scaleX(0.8625);transform-origin:0 0;">Exit</div>
<div class="t" style="left:678.80px;top:301.00px;font-size:8.5px;color:#2b2b2b;font-weight:bold;transform:scaleX(0.8625);transform-origin:0 0;">Entry Time Parsed</div>
<div class="t" style="left:769.70px;top:301.00px;font-size:8.5px;color:#2b2b2b;font-weight:bold;transform:scaleX(0.8625);transform-origin:0 0;">Exit Time Parsed</div>
<div class="a" style="left:443px;top:311px;width:565px;height:138px;overflow:hidden">
<div class="a" style="left:0px;top:0px;width:48px;height:150px;background:#e8edf7;"></div>
<div class="a" style="left:48px;top:0px;width:360.4px;height:150px;background:#ffffff;"></div>
<div class="a" style="left:0px;top:12px;width:408.4px;height:1px;background:#d5dce8;"></div>
<div class="t" style="left:41.22px;top:3.20px;font-size:8.5px;color:#3a3a3a;font-weight:normal;transform:scaleX(0.8361);transform-origin:0 0;">4</div>
<div class="t" style="left:51.60px;top:3.20px;font-size:8.5px;color:#3a3a3a;font-weight:normal;transform:scaleX(0.8872);transform-origin:0 0;">Living Room</div>
<div class="t" style="left:119.30px;top:3.20px;font-size:8.5px;color:#3a3a3a;font-weight:normal;transform:scaleX(0.8361);transform-origin:0 0;">12:36 PM</div>
<div class="t" style="left:177.60px;top:3.20px;font-size:8.5px;color:#3a3a3a;font-weight:normal;transform:scaleX(0.8361);transform-origin:0 0;">12:38 PM</div>
<div class="t" style="left:235.80px;top:3.20px;font-size:8.5px;color:#3a3a3a;font-weight:normal;transform:scaleX(0.8091);transform-origin:0 0;">12:36:00</div>
<div class="t" style="left:326.70px;top:3.20px;font-size:8.5px;color:#3a3a3a;font-weight:normal;transform:scaleX(0.8091);transform-origin:0 0;">12:38:00</div>
<div class="a" style="left:0px;top:25px;width:408.4px;height:1px;background:#d5dce8;"></div>
<div class="t" style="left:41.22px;top:15.43px;font-size:8.5px;color:#3a3a3a;font-weight:normal;transform:scaleX(0.8361);transform-origin:0 0;">5</div>
<div class="t" style="left:51.60px;top:15.43px;font-size:8.5px;color:#3a3a3a;font-weight:normal;transform:scaleX(0.8872);transform-origin:0 0;">Living Room</div>
<div class="t" style="left:119.30px;top:15.43px;font-size:8.5px;color:#3a3a3a;font-weight:normal;transform:scaleX(0.8361);transform-origin:0 0;">12:36 PM</div>
<div class="t" style="left:177.60px;top:15.43px;font-size:8.5px;color:#3a3a3a;font-weight:normal;transform:scaleX(0.8361);transform-origin:0 0;">1:15 PM</div>
<div class="t" style="left:235.80px;top:15.43px;font-size:8.5px;color:#3a3a3a;font-weight:normal;transform:scaleX(0.8091);transform-origin:0 0;">12:36:00</div>
<div class="t" style="left:326.70px;top:15.43px;font-size:8.5px;color:#3a3a3a;font-weight:normal;transform:scaleX(0.8091);transform-origin:0 0;">13:15:00</div>
<div class="a" style="left:0px;top:37px;width:408.4px;height:1px;background:#d5dce8;"></div>
<div class="t" style="left:41.22px;top:27.66px;font-size:8.5px;color:#3a3a3a;font-weight:normal;transform:scaleX(0.8361);transform-origin:0 0;">6</div>
<div class="t" style="left:51.60px;top:27.66px;font-size:8.5px;color:#3a3a3a;font-weight:normal;transform:scaleX(0.8872);transform-origin:0 0;">Living Room</div>
<div class="t" style="left:119.30px;top:27.66px;font-size:8.5px;color:#3a3a3a;font-weight:normal;transform:scaleX(0.8361);transform-origin:0 0;">12:50 PM</div>
<div class="t" style="left:177.60px;top:27.66px;font-size:8.5px;color:#3a3a3a;font-weight:normal;transform:scaleX(0.8361);transform-origin:0 0;">1:16 PM</div>
<div class="t" style="left:235.80px;top:27.66px;font-size:8.5px;color:#3a3a3a;font-weight:normal;transform:scaleX(0.8091);transform-origin:0 0;">12:50:00</div>
<div class="t" style="left:326.70px;top:27.66px;font-size:8.5px;color:#3a3a3a;font-weight:normal;transform:scaleX(0.8091);transform-origin:0 0;">13:16:00</div>
<div class="a" style="left:0px;top:49px;width:408.4px;height:1px;background:#d5dce8;"></div>
<div class="t" style="left:41.22px;top:39.89px;font-size:8.5px;color:#3a3a3a;font-weight:normal;transform:scaleX(0.8361);transform-origin:0 0;">7</div>
<div class="t" style="left:51.60px;top:39.89px;font-size:8.5px;color:#3a3a3a;font-weight:normal;transform:scaleX(0.8872);transform-origin:0 0;">Living Room</div>
<div class="t" style="left:119.30px;top:39.89px;font-size:8.5px;color:#3a3a3a;font-weight:normal;transform:scaleX(0.8361);transform-origin:0 0;">2:05 PM</div>
<div class="t" style="left:177.60px;top:39.89px;font-size:8.5px;color:#3a3a3a;font-weight:normal;transform:scaleX(0.8361);transform-origin:0 0;">2:20 PM</div>
<div class="t" style="left:235.80px;top:39.89px;font-size:8.5px;color:#3a3a3a;font-weight:normal;transform:scaleX(0.8091);transform-origin:0 0;">14:05:00</div>
<div class="t" style="left:326.70px;top:39.89px;font-size:8.5px;color:#3a3a3a;font-weight:normal;transform:scaleX(0.8091);transform-origin:0 0;">14:20:00</div>
<div class="a" style="left:0px;top:61px;width:408.4px;height:1px;background:#d5dce8;"></div>
<div class="t" style="left:41.22px;top:52.12px;font-size:8.5px;color:#3a3a3a;font-weight:normal;transform:scaleX(0.8361);transform-origin:0 0;">8</div>
<div class="t" style="left:51.60px;top:52.12px;font-size:8.5px;color:#3a3a3a;font-weight:normal;transform:scaleX(0.8872);transform-origin:0 0;">Living Room</div>
<div class="t" style="left:119.30px;top:52.12px;font-size:8.5px;color:#3a3a3a;font-weight:normal;transform:scaleX(0.8361);transform-origin:0 0;">3:14 PM</div>
<div class="t" style="left:177.60px;top:52.12px;font-size:8.5px;color:#3a3a3a;font-weight:normal;transform:scaleX(0.8361);transform-origin:0 0;">4:10 PM</div>
<div class="t" style="left:235.80px;top:52.12px;font-size:8.5px;color:#3a3a3a;font-weight:normal;transform:scaleX(0.8091);transform-origin:0 0;">15:14:00</div>
<div class="t" style="left:326.70px;top:52.12px;font-size:8.5px;color:#3a3a3a;font-weight:normal;transform:scaleX(0.8091);transform-origin:0 0;">16:10:00</div>
<div class="a" style="left:0px;top:73px;width:408.4px;height:1px;background:#d5dce8;"></div>
<div class="t" style="left:41.22px;top:64.35px;font-size:8.5px;color:#3a3a3a;font-weight:normal;transform:scaleX(0.8361);transform-origin:0 0;">9</div>
<div class="t" style="left:51.60px;top:64.35px;font-size:8.5px;color:#3a3a3a;font-weight:normal;transform:scaleX(0.8872);transform-origin:0 0;">Living Room</div>
<div class="t" style="left:119.30px;top:64.35px;font-size:8.5px;color:#3a3a3a;font-weight:normal;transform:scaleX(0.8361);transform-origin:0 0;">3:20 PM</div>
<div class="t" style="left:177.60px;top:64.35px;font-size:8.5px;color:#3a3a3a;font-weight:normal;transform:scaleX(0.8361);transform-origin:0 0;">3:35 PM</div>
<div class="t" style="left:235.80px;top:64.35px;font-size:8.5px;color:#3a3a3a;font-weight:normal;transform:scaleX(0.8091);transform-origin:0 0;">15:20:00</div>
<div class="t" style="left:326.70px;top:64.35px;font-size:8.5px;color:#3a3a3a;font-weight:normal;transform:scaleX(0.8091);transform-origin:0 0;">15:35:00</div>
<div class="a" style="left:0px;top:86px;width:408.4px;height:1px;background:#d5dce8;"></div>
<div class="t" style="left:37.04px;top:76.58px;font-size:8.5px;color:#3a3a3a;font-weight:normal;transform:scaleX(0.8361);transform-origin:0 0;">10</div>
<div class="t" style="left:51.60px;top:76.58px;font-size:8.5px;color:#3a3a3a;font-weight:normal;transform:scaleX(0.8872);transform-origin:0 0;">Living Room</div>
<div class="t" style="left:119.30px;top:76.58px;font-size:8.5px;color:#3a3a3a;font-weight:normal;transform:scaleX(0.8361);transform-origin:0 0;">5:01 PM</div>
<div class="t" style="left:177.60px;top:76.58px;font-size:8.5px;color:#3a3a3a;font-weight:normal;transform:scaleX(0.8361);transform-origin:0 0;">5:25 PM</div>
<div class="t" style="left:235.80px;top:76.58px;font-size:8.5px;color:#3a3a3a;font-weight:normal;transform:scaleX(0.8091);transform-origin:0 0;">17:01:00</div>
<div class="t" style="left:326.70px;top:76.58px;font-size:8.5px;color:#3a3a3a;font-weight:normal;transform:scaleX(0.8091);transform-origin:0 0;">17:25:00</div>
<div class="a" style="left:0px;top:98px;width:408.4px;height:1px;background:#d5dce8;"></div>
<div class="t" style="left:37.87px;top:88.81px;font-size:8.5px;color:#3a3a3a;font-weight:normal;transform:scaleX(0.8361);transform-origin:0 0;">11</div>
<div class="t" style="left:51.60px;top:88.81px;font-size:8.5px;color:#3a3a3a;font-weight:normal;transform:scaleX(0.8872);transform-origin:0 0;">Living Room</div>
<div class="t" style="left:119.30px;top:88.81px;font-size:8.5px;color:#3a3a3a;font-weight:normal;transform:scaleX(0.8361);transform-origin:0 0;">7:36 PM</div>
<div class="t" style="left:177.60px;top:88.81px;font-size:8.5px;color:#3a3a3a;font-weight:normal;transform:scaleX(0.8361);transform-origin:0 0;">9:45 PM</div>
<div class="t" style="left:235.80px;top:88.81px;font-size:8.5px;color:#3a3a3a;font-weight:normal;transform:scaleX(0.8091);transform-origin:0 0;">19:36:00</div>
<div class="t" style="left:326.70px;top:88.81px;font-size:8.5px;color:#3a3a3a;font-weight:normal;transform:scaleX(0.8091);transform-origin:0 0;">21:45:00</div>
<div class="a" style="left:0px;top:110px;width:408.4px;height:1px;background:#d5dce8;"></div>
<div class="t" style="left:37.87px;top:101.04px;font-size:8.5px;color:#3a3a3a;font-weight:normal;transform:scaleX(0.8361);transform-origin:0 0;">12</div>
<div class="t" style="left:51.60px;top:101.04px;font-size:8.5px;color:#3a3a3a;font-weight:normal;transform:scaleX(0.8872);transform-origin:0 0;">Kitchen</div>
<div class="t" style="left:119.30px;top:101.04px;font-size:8.5px;color:#3a3a3a;font-weight:normal;transform:scaleX(0.8361);transform-origin:0 0;">7:15 AM</div>
<div class="t" style="left:177.60px;top:101.04px;font-size:8.5px;color:#3a3a3a;font-weight:normal;transform:scaleX(0.8361);transform-origin:0 0;">7:20 AM</div>
<div class="t" style="left:235.80px;top:101.04px;font-size:8.5px;color:#3a3a3a;font-weight:normal;transform:scaleX(0.8091);transform-origin:0 0;">07:15:00</div>
<div class="t" style="left:326.70px;top:101.04px;font-size:8.5px;color:#3a3a3a;font-weight:normal;transform:scaleX(0.8091);transform-origin:0 0;">07:20:00</div>
<div class="a" style="left:0px;top:122px;width:408.4px;height:1px;background:#d5dce8;"></div>
<div class="t" style="left:37.04px;top:113.27px;font-size:8.5px;color:#3a3a3a;font-weight:normal;transform:scaleX(0.8361);transform-origin:0 0;">13</div>
<div class="t" style="left:51.60px;top:113.27px;font-size:8.5px;color:#3a3a3a;font-weight:normal;transform:scaleX(0.8872);transform-origin:0 0;">Kitchen</div>
<div class="t" style="left:119.30px;top:113.27px;font-size:8.5px;color:#3a3a3a;font-weight:normal;transform:scaleX(0.8361);transform-origin:0 0;">7:23 AM</div>
<div class="t" style="left:177.60px;top:113.27px;font-size:8.5px;color:#3a3a3a;font-weight:normal;transform:scaleX(0.8361);transform-origin:0 0;">8:20 AM</div>
<div class="t" style="left:235.80px;top:113.27px;font-size:8.5px;color:#3a3a3a;font-weight:normal;transform:scaleX(0.8091);transform-origin:0 0;">07:23:00</div>
<div class="t" style="left:326.70px;top:113.27px;font-size:8.5px;color:#3a3a3a;font-weight:normal;transform:scaleX(0.8091);transform-origin:0 0;">08:20:00</div>
<div class="a" style="left:0px;top:135px;width:408.4px;height:1px;background:#d5dce8;"></div>
<div class="t" style="left:37.04px;top:125.50px;font-size:8.5px;color:#3a3a3a;font-weight:normal;transform:scaleX(0.8361);transform-origin:0 0;">14</div>
<div class="t" style="left:51.60px;top:125.50px;font-size:8.5px;color:#3a3a3a;font-weight:normal;transform:scaleX(0.8872);transform-origin:0 0;">Kitchen</div>
<div class="t" style="left:119.30px;top:125.50px;font-size:8.5px;color:#3a3a3a;font-weight:normal;transform:scaleX(0.8361);transform-origin:0 0;">7:27 AM</div>
<div class="t" style="left:177.60px;top:125.50px;font-size:8.5px;color:#3a3a3a;font-weight:normal;transform:scaleX(0.8361);transform-origin:0 0;">8:10 AM</div>
<div class="t" style="left:235.80px;top:125.50px;font-size:8.5px;color:#3a3a3a;font-weight:normal;transform:scaleX(0.8091);transform-origin:0 0;">07:27:00</div>
<div class="t" style="left:326.70px;top:125.50px;font-size:8.5px;color:#3a3a3a;font-weight:normal;transform:scaleX(0.8091);transform-origin:0 0;">08:10:00</div>
<div class="a" style="left:0px;top:147px;width:408.4px;height:1px;background:#d5dce8;"></div>
<div class="a" style="left:48px;top:0px;width:1px;height:150px;background:#d5dce8;"></div>
<div class="a" style="left:116px;top:0px;width:1px;height:150px;background:#d5dce8;"></div>
<div class="a" style="left:174px;top:0px;width:1px;height:150px;background:#d5dce8;"></div>
<div class="a" style="left:232px;top:0px;width:1px;height:150px;background:#d5dce8;"></div>
<div class="a" style="left:323px;top:0px;width:1px;height:150px;background:#d5dce8;"></div>
<div class="a" style="left:408px;top:0px;width:1px;height:150px;background:#d5dce8;"></div>
</div>
<div class="a" style="left:1007.5px;top:299px;width:10.2px;height:150px;background:#f0f0f0;"></div>
<div class="a" style="left:1007.5px;top:323.7px;width:10.2px;height:49.3px;background:#cdcdcd;"></div>
<svg style="left:1009.5px;top:302.5px" width="6" height="4" viewBox="0 0 6 4"><path d="M0.5 3.5 L3 1 L5.5 3.5" fill="none" stroke="#333" stroke-width="1.1"/></svg>
<svg style="left:1009.5px;top:441px" width="6" height="4" viewBox="0 0 6 4"><path d="M0.5 0.5 L3 3 L5.5 0.5" fill="none" stroke="#333" stroke-width="1.1"/></svg>
<div class="a" style="left:443px;top:449px;width:575px;height:10px;background:#f0f0f0;"></div>
<svg style="left:447.5px;top:451.5px" width="4" height="6" viewBox="0 0 4 6"><path d="M3.5 0.5 L1 3 L3.5 5.5" fill="none" stroke="#b8b8b8" stroke-width="1"/></svg>
<svg style="left:999.5px;top:451.5px" width="4" height="6" viewBox="0 0 4 6"><path d="M0.5 0.5 L3 3 L0.5 5.5" fill="none" stroke="#b8b8b8" stroke-width="1"/></svg>
<div class="a" style="left:422px;top:459px;width:602px;height:3px;background:#e8eef8;"></div>
</div></body></html>
